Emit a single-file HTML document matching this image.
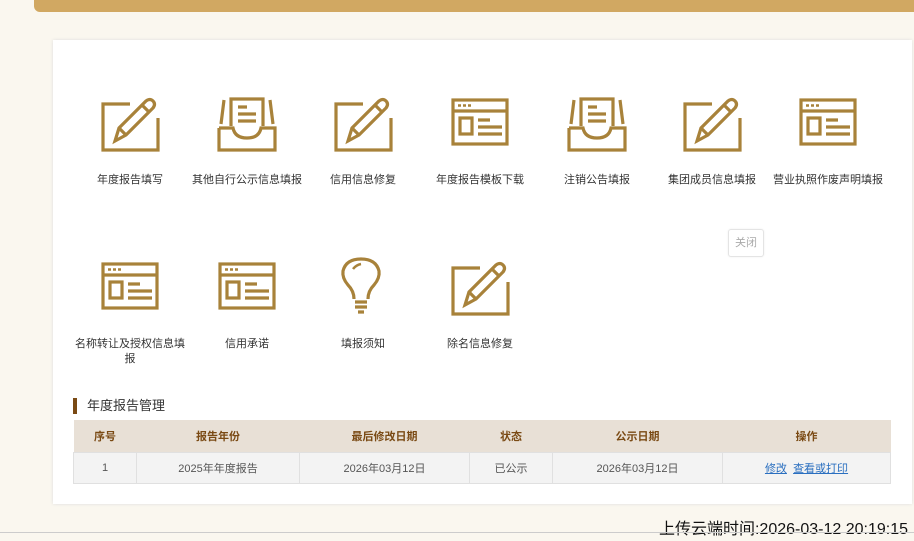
<!DOCTYPE html>
<html><head><meta charset="utf-8"><style>
*{margin:0;padding:0;box-sizing:border-box}
body{width:914px;height:541px;background:#faf7ef;font-family:"Liberation Sans","Noto Sans CJK SC",sans-serif;position:relative;overflow:hidden}
.top{position:absolute;left:34px;top:0;width:880px;height:12px;background:#d1a862;border-bottom-left-radius:6px}
.panel{position:absolute;left:53px;top:40px;width:859px;height:464px;background:#fff;box-shadow:0 0 3px #ddd}
.it{position:absolute;width:116px;text-align:center;font-size:11px;color:#333;line-height:15px}
.it svg{display:block;margin:0 auto 19px}
.close{position:absolute;left:728px;top:229px;width:36px;height:28px;border:1px solid #e4e4e4;border-radius:3px;font-size:11px;color:#aaa;text-align:center;line-height:26px;box-shadow:0 0 2px #eee}
.ttl{position:absolute;left:73px;top:398px;font-size:13px;color:#333;line-height:16px;padding-left:10px;border-left:4px solid #7a4a14}
table{position:absolute;left:73px;top:420px;width:818px;border-collapse:collapse;font-size:11px}
th{background:#e8e0d6;color:#7a4a14;height:32px;font-weight:bold}
td{background:#f3f3f3;color:#555;height:31px;text-align:center;border:1px solid #e0e0e0}
a{color:#2a6fc0}
.ft{position:absolute;right:6px;top:515px;font-size:16px;color:#111}
.ln{position:absolute;left:0;top:532px;width:914px;height:1px;background:#ccc}
</style></head><body>
<div class="top"></div>
<div class="panel"></div>
<svg width="0" height="0" style="position:absolute"><defs>
<g id="pen" fill="none" stroke="#a8823a" stroke-width="3.2"><path d="M30 8H3V54H58V22"/><path d="M15 45L19 32L46 5Q50 2 53 5Q56 8 53 12L26 39Z"/><path d="M19 32L26 39M42 9L49 16"/></g>
<g id="box" fill="none" stroke="#a8823a" stroke-width="3.2"><path d="M2 32V54H58V32H44Q42 42 30 42Q18 42 16 32H2"/><path d="M7 4L4 28M53 4L56 28"/><path d="M14 30V3H46V30"/><path d="M21 11H30M21 18H39M21 25H39"/></g>
<g id="win" fill="none" stroke="#a8823a" stroke-width="3.2"><rect x="3" y="4" width="54" height="44"/><path d="M3 15H57"/><path d="M8 9.5H11M13 9.5H16M18 9.5H21" stroke-width="2.5"/><rect x="10" y="22" width="12" height="16"/><path d="M28 24H40M28 31H52M28 38H52"/></g>
<g id="bulb" fill="none" stroke="#a8823a" stroke-width="3.2"><path d="M21 42Q21 34 15 28Q9 21 10 14Q13 2 28 2Q43 2 46 14Q47 21 41 28Q35 34 35 42"/><path d="M20 12Q23 8 28 7" stroke-width="2.5"/><path d="M22 45H34M22 50H34M25 55H31"/></g>
</defs></svg>
<div class="it" style="left:72px;top:96px"><svg width="60" height="58"><use href="#pen"/></svg>年度报告填写</div>
<div class="it" style="left:189px;top:96px"><svg width="60" height="58"><use href="#box"/></svg>其他自行公示信息填报</div>
<div class="it" style="left:305px;top:96px"><svg width="60" height="58"><use href="#pen"/></svg>信用信息修复</div>
<div class="it" style="left:422px;top:96px"><svg width="60" height="58"><use href="#win"/></svg>年度报告模板下载</div>
<div class="it" style="left:539px;top:96px"><svg width="60" height="58"><use href="#box"/></svg>注销公告填报</div>
<div class="it" style="left:654px;top:96px"><svg width="60" height="58"><use href="#pen"/></svg>集团成员信息填报</div>
<div class="it" style="left:770px;top:96px"><svg width="60" height="58"><use href="#win"/></svg>营业执照作废声明填报</div>
<div class="it" style="left:72px;top:260px"><svg width="60" height="58"><use href="#win"/></svg>名称转让及授权信息填<br>报</div>
<div class="it" style="left:189px;top:260px"><svg width="60" height="58"><use href="#win"/></svg>信用承诺</div>
<div class="it" style="left:305px;top:257px"><svg width="60" height="61"><use href="#bulb"/></svg>填报须知</div>
<div class="it" style="left:422px;top:260px"><svg width="60" height="58"><use href="#pen"/></svg>除名信息修复</div>
<div class="close">关闭</div>
<div class="ttl">年度报告管理</div>
<table><tr><th style="width:63px">序号</th><th style="width:163px">报告年份</th><th style="width:170px">最后修改日期</th><th style="width:83px">状态</th><th style="width:170px">公示日期</th><th>操作</th></tr>
<tr><td>1</td><td>2025年年度报告</td><td>2026年03月12日</td><td>已公示</td><td>2026年03月12日</td><td><a href="#">修改</a>&nbsp; <a href="#">查看或打印</a></td></tr></table>
<div class="ft">上传云端时间:2026-03-12 20:19:15</div>
<div class="ln"></div>
</body></html>
